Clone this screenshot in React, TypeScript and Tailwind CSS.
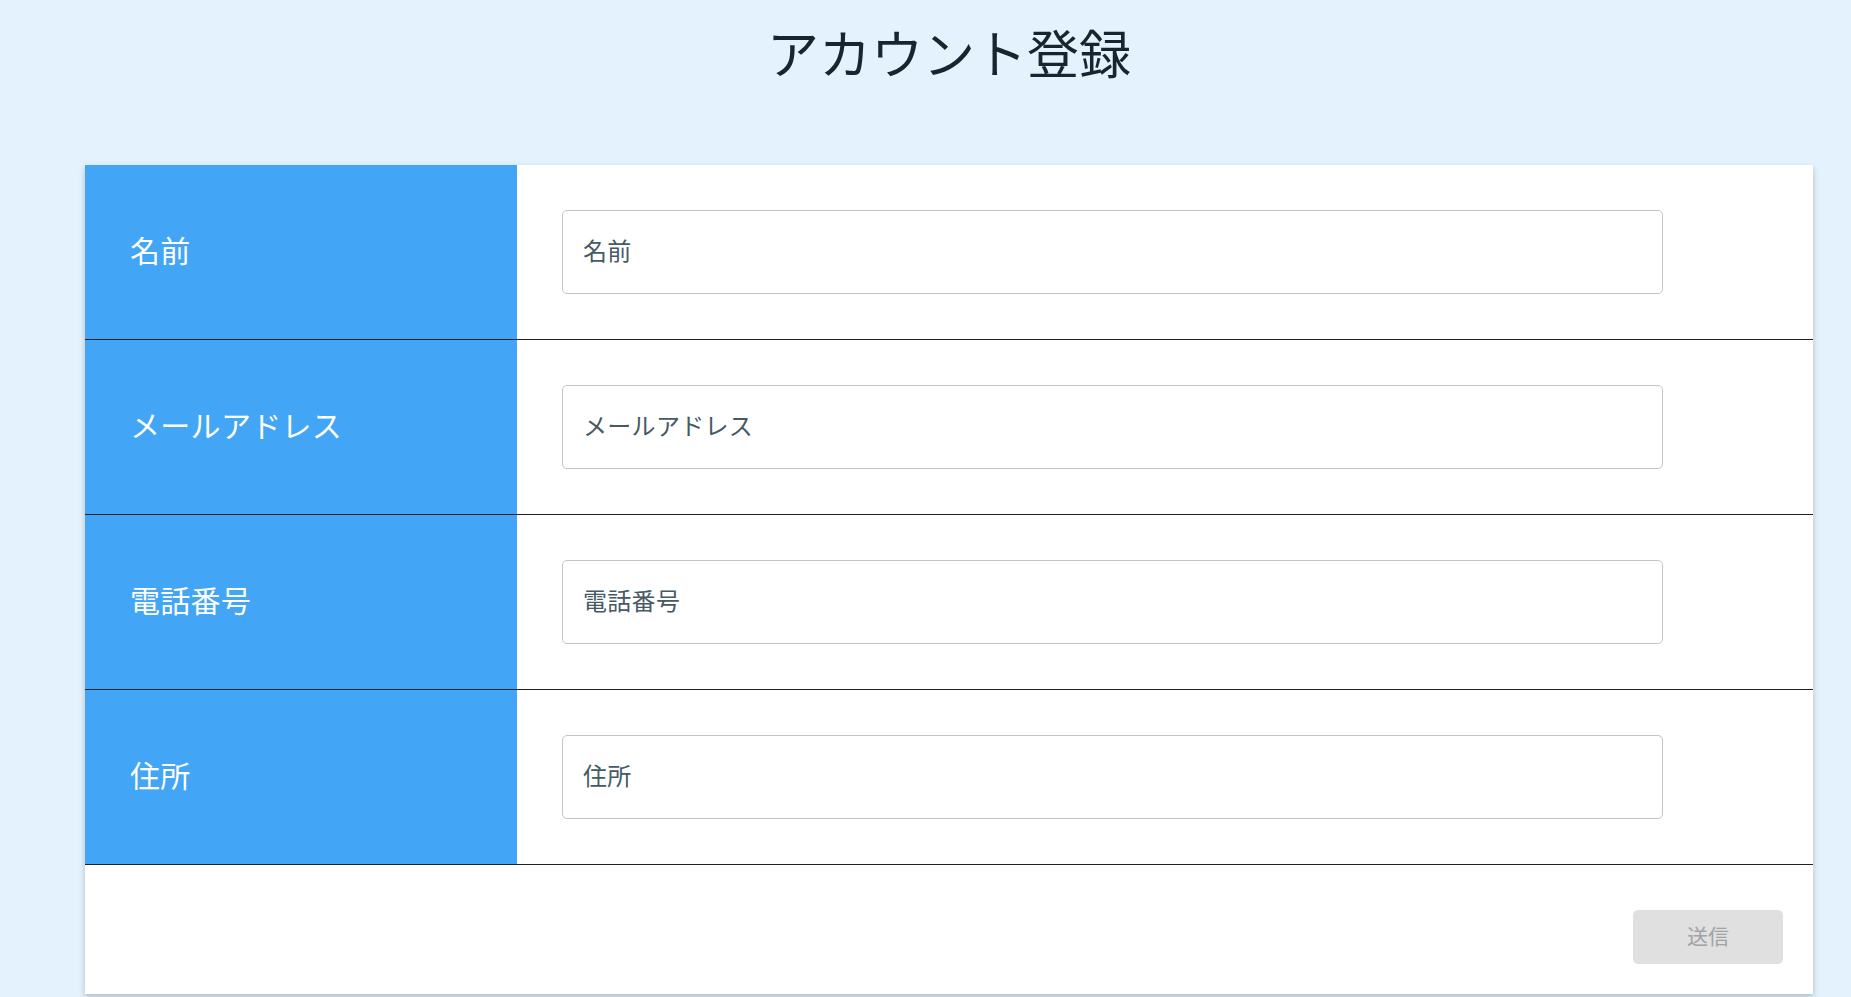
import React from "react";

const rows = ["名前", "メールアドレス", "電話番号", "住所"];

export default function App() {
  return (
    <div
      className="min-h-screen w-full bg-[#e3f2fd]"
      style={{ fontFamily: '"Noto Sans CJK JP", "Noto Sans", sans-serif' }}
    >
      <div className="ml-[85px] w-[1728px] pt-[21px]">
        <h1 className="text-center text-[52px] leading-[62px] font-normal text-[#17262e]">
          アカウント登録
        </h1>
        <div className="mt-[82px] bg-white shadow-[0_3px_6px_rgba(0,0,0,0.22)]">
          {rows.map((r) => (
            <div key={r} className="flex h-[175px] border-b border-[#212121]">
              <div className="flex w-[432px] items-center bg-[#42a5f5] pb-[5px] pl-[45px] text-[30px] tracking-[0.3px] text-white">
                {r}
              </div>
              <div className="flex flex-1 items-center pl-[45px]">
                <input
                  type="text"
                  placeholder={r}
                  className="h-[84px] w-[1101px] rounded-[5px] border border-[#c4c4c4] bg-white pb-[6px] pl-[20px] text-[24px] tracking-[0.3px] text-[#455a64] outline-none placeholder:text-[#455a64]"
                />
              </div>
            </div>
          ))}
          <div className="flex h-[129px] items-start justify-end pr-[30px] pt-[45px]">
            <button
              type="button"
              disabled
              className="h-[54px] w-[150px] rounded-[5px] bg-[#e0e0e0] pb-[3px] text-[21px] text-[#a3a3a3]"
            >
              送信
            </button>
          </div>
        </div>
      </div>
    </div>
  );
}
